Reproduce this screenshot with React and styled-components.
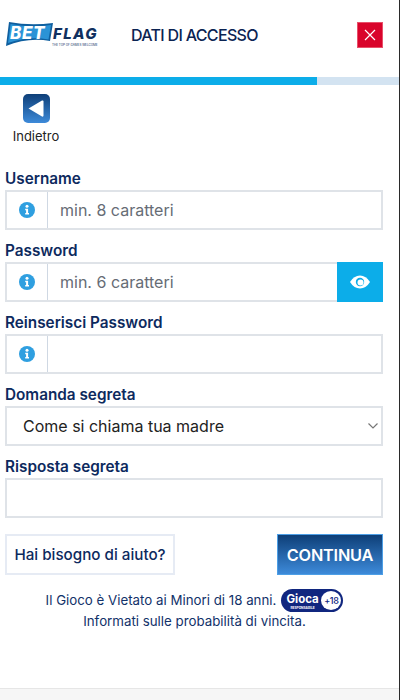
import { createGlobalStyle } from "styled-components";
import styled from "styled-components";

const GlobalStyle = createGlobalStyle`
  html, body {
    margin: 0;
    padding: 0;
    background: #2a2a2a;
  }
  * {
    box-sizing: border-box;
  }
`;

//#region Styled
const Page = styled.main`
  width: 399px;
  height: 700px;
  background: #fff;
  display: flex;
  flex-direction: column;
  font-family: Inter, "Liberation Sans", sans-serif;
  overflow: hidden;
`;

const Header = styled.header`
  height: 77px;
  display: flex;
  align-items: center;
  padding: 0 16px 8px 6px;
`;

const Title = styled.h1`
  margin: 0 0 0 33px;
  flex: 1;
  font-size: 16px;
  line-height: 20px;
  font-weight: 500;
  letter-spacing: -0.68px;
  color: #0b2352;
`;

const CloseButton = styled.button`
  width: 26px;
  height: 26px;
  padding: 0;
  border: 1px solid #e8506a;
  background: #d9042b;
  display: flex;
  align-items: center;
  justify-content: center;
`;

const ProgressTrack = styled.div`
  height: 8px;
  background: #d3e3f1;
`;

const ProgressFill = styled.div`
  height: 100%;
  background: #0cade9;
`;

const BackLink = styled.div`
  width: 72px;
  margin-top: 9px;
  display: flex;
  flex-direction: column;
  align-items: center;
  gap: 4px;
  font-size: 13px;
  line-height: 18px;
  color: #222;
`;

const Form = styled.form`
  display: flex;
  flex-direction: column;
  padding: 0 16px 0 5px;
  margin-top: 13px;
`;

const Label = styled.label`
  height: 32px;
  display: flex;
  align-items: center;
  padding-top: 9px;
  font-size: 15.3px;
  font-weight: 600;
  color: #0d2a5e;
`;

const FieldRow = styled.div`
  height: 40px;
  display: flex;
  border: 2px solid #dfe3e8;
  border-right-width: ${(p) => (p.$flushRight ? 0 : "2px")};
  background: #fff;
`;

const InfoCell = styled.div`
  width: 41px;
  flex: none;
  display: flex;
  align-items: center;
  justify-content: center;
  border-right: 1px solid #cfd8e3;
`;

const TextInput = styled.input`
  flex: 1;
  min-width: 0;
  border: 0;
  outline: 0;
  background: transparent;
  padding: 0 ${(p) => (p.$plain ? "16px" : "12px")};
  font-family: inherit;
  font-size: 16px;
  color: #222;

  &::placeholder {
    color: #666c75;
    opacity: 1;
  }
`;

const EyeButton = styled.button`
  width: 46px;
  flex: none;
  margin: -2px 0;
  padding: 0;
  border: 0;
  background: #0cade9;
  display: flex;
  align-items: center;
  justify-content: center;
`;

const SelectWrap = styled.div`
  position: relative;
  height: 40px;
`;

const Select = styled.select`
  width: 100%;
  height: 100%;
  appearance: none;
  border: 2px solid #dfe3e8;
  border-radius: 0;
  background: #fff;
  padding: 0 30px 0 16px;
  font-family: inherit;
  font-size: 16px;
  color: #222;
`;

const Chevron = styled.svg`
  position: absolute;
  right: 5px;
  top: 17px;
  pointer-events: none;
`;

const Actions = styled.div`
  display: flex;
  justify-content: space-between;
  margin: 16px 16px 0 5px;
`;

const HelpButton = styled.button`
  width: 170px;
  height: 41px;
  padding: 0;
  border: 2px solid #e6ebf4;
  background: #fff;
  font-family: inherit;
  font-size: 15.2px;
  font-weight: 500;
  color: #0d2a5e;
`;

const ContinueButton = styled.button`
  width: 106px;
  height: 41px;
  padding: 0;
  border: 1px solid #4d9fe6;
  background: linear-gradient(180deg, #0e3f78 0%, #3d8ad9 100%);
  font-family: inherit;
  font-size: 16.3px;
  font-weight: 600;
  letter-spacing: -0.2px;
  color: #fff;
`;

const Notice = styled.div`
  margin-top: 14px;
  display: flex;
  flex-direction: column;
  align-items: center;
  font-size: 13.3px;
  line-height: 19px;
  color: #12326a;
  padding-right: 10px;
`;

const NoticeLine = styled.div`
  display: flex;
  align-items: center;
  gap: 5px;
  height: 23px;
`;

const Badge = styled.div`
  width: 62px;
  height: 23px;
  padding: 2px 2px 2px 5px;
  border-radius: 12px;
  background: #10267f;
  display: flex;
  align-items: center;
  justify-content: space-between;
`;

const BadgeWord = styled.div`
  display: flex;
  flex-direction: column;
  align-items: center;
  color: #fff;
  font-size: 11.5px;
  line-height: 14px;
  font-weight: 700;
  letter-spacing: 0;
`;

const BadgeSmall = styled.span`
  font-size: 3.2px;
  line-height: 4px;
  letter-spacing: 0;
`;

const BadgeAge = styled.div`
  width: 20px;
  height: 19px;
  border-radius: 50%;
  background: #fff;
  display: flex;
  align-items: center;
  justify-content: center;
  color: #10267f;
  font-size: 9px;
  font-weight: 500;
  letter-spacing: -0.3px;
`;

const Footer = styled.footer`
  margin-top: auto;
  height: 12px;
  background: #f6f6f6;
  border-top: 1px solid #e6e6e6;
`;
//#endregion

function Logo() {
  return (
    <svg width="92" height="25" viewBox="0 0 92 25" aria-label="BetFlag">
      <path d="M3 0 Q24 4 47 1 L44 19 Q22 15 0 24 Z" fill="#0f5f9f" />
      <path d="M4.5 2 Q24 6 45 3 L42.5 17.5 Q22 14 2 21 Z" fill="#2b93d6" />
      <text x="4" y="17" fontFamily="Inter, sans-serif" fontSize="17" fontWeight="800" fontStyle="italic" fill="#fff" letterSpacing="0.6">BET</text>
      <text x="47" y="16.5" fontFamily="Inter, sans-serif" fontSize="15" fontWeight="800" fontStyle="italic" fill="#10305f" letterSpacing="1.4">FLAG</text>
      <text x="46" y="23.5" fontFamily="Inter, sans-serif" fontSize="3" fill="#10305f">THE TOP OF GAMES WELCOME</text>
    </svg>
  );
}

function BackIcon() {
  return (
    <svg width="27" height="29" viewBox="0 0 27 29">
      <defs>
        <linearGradient id="backFill" x1="0" y1="0" x2="0" y2="1">
          <stop offset="0" stopColor="#0e3f78" />
          <stop offset="1" stopColor="#3d8ad9" />
        </linearGradient>
      </defs>
      <rect width="27" height="29" rx="5" fill="url(#backFill)" />
      <path d="M5.5 14.5 L19 6.5 Q20.5 6 20.5 7.5 L20.5 21.5 Q20.5 23 19 22.5 Z" fill="#fff" />
    </svg>
  );
}

function InfoIcon() {
  return (
    <svg width="16" height="16" viewBox="0 0 16 16">
      <circle cx="8" cy="8" r="8" fill="#2f9fe0" />
      <circle cx="8" cy="4.3" r="1.5" fill="#fff" />
      <path d="M6.2 6.8 H9.1 V11 H10 V12.4 H6.2 V11 H7.1 V8.2 H6.2 Z" fill="#fff" />
    </svg>
  );
}

function EyeIcon() {
  return (
    <svg width="20" height="14" viewBox="0 0 20 14">
      <path d="M0 7 Q4 0.5 10 0.5 Q16 0.5 20 7 Q16 13.5 10 13.5 Q4 13.5 0 7 Z" fill="#fff" />
      <circle cx="10" cy="7" r="4.2" fill="#0cade9" />
      <circle cx="10.5" cy="7.5" r="3" fill="#fff" />
    </svg>
  );
}

function Field({ label, placeholder, info = true, eye = false }) {
  return (
    <>
      <Label>{label}</Label>
      <FieldRow $flushRight={eye}>
        {info && (
          <InfoCell>
            <InfoIcon />
          </InfoCell>
        )}
        <TextInput placeholder={placeholder} $plain={!info} />
        {eye && (
          <EyeButton type="button">
            <EyeIcon />
          </EyeButton>
        )}
      </FieldRow>
    </>
  );
}

export default function App() {
  return (
    <>
      <GlobalStyle />
      <Page>
        <Header>
          <Logo />
          <Title>DATI DI ACCESSO</Title>
          <CloseButton type="button" aria-label="Chiudi">
            <svg width="12" height="12" viewBox="0 0 12 12">
              <path d="M1 1 L11 11 M11 1 L1 11" stroke="#fff" strokeWidth="1.2" fill="none" />
            </svg>
          </CloseButton>
        </Header>
        <ProgressTrack>
          <ProgressFill style={{ width: "317px" }} />
        </ProgressTrack>
        <BackLink>
          <BackIcon />
          Indietro
        </BackLink>
        <Form>
          <Field label="Username" placeholder="min. 8 caratteri" />
          <Field label="Password" placeholder="min. 6 caratteri" eye />
          <Field label="Reinserisci Password" />
          <Label>Domanda segreta</Label>
          <SelectWrap>
            <Select defaultValue="madre">
              <option value="madre">Come si chiama tua madre</option>
            </Select>
            <Chevron width="10" height="6" viewBox="0 0 10 6">
              <path d="M0.5 0.5 L5 5 L9.5 0.5" stroke="#777" strokeWidth="1.2" fill="none" />
            </Chevron>
          </SelectWrap>
          <Field label="Risposta segreta" info={false} />
        </Form>
        <Actions>
          <HelpButton type="button">Hai bisogno di aiuto?</HelpButton>
          <ContinueButton type="button">CONTINUA</ContinueButton>
        </Actions>
        <Notice>
          <NoticeLine>
            Il Gioco è Vietato ai Minori di 18 anni.
            <Badge>
              <BadgeWord>
                Gioca
                <BadgeSmall>RESPONSABILE</BadgeSmall>
              </BadgeWord>
              <BadgeAge>+18</BadgeAge>
            </Badge>
          </NoticeLine>
          Informati sulle probabilità di vincita.
        </Notice>
        <Footer />
      </Page>
    </>
  );
}
